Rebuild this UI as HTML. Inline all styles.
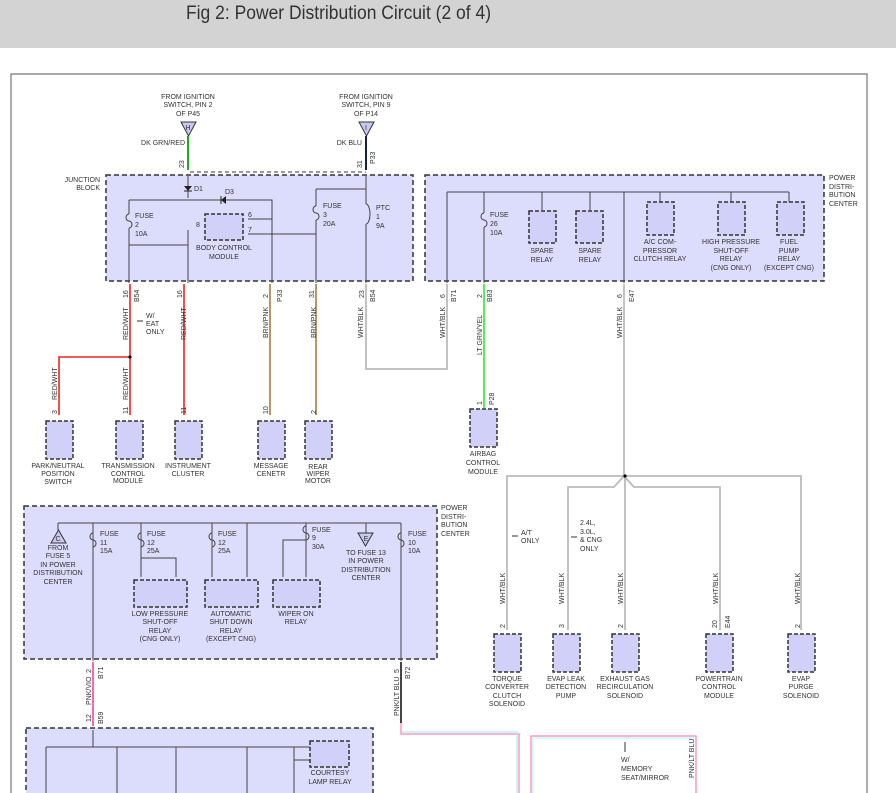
<!DOCTYPE html>
<html><head><meta charset="utf-8"><style>
body{margin:0;width:896px;height:793px;overflow:hidden;background:#fff;font-family:"Liberation Sans",sans-serif}
.hd{position:absolute;left:0;top:0;width:896px;height:48px;background:#d3d3d3}
.hd span{position:absolute;left:186px;top:3px;font-size:19px;color:#333;transform:scaleX(0.92);transform-origin:left}
svg{position:absolute;left:0;top:0}
text{font-family:"Liberation Sans",sans-serif;font-size:7px;fill:#333}
.c{text-anchor:middle}.r{text-anchor:end}
.box{fill:#dcdcfc;stroke:#333;stroke-width:1.5;stroke-dasharray:5 3}
.rel{fill:#d0d0f8;stroke:#333;stroke-width:1.5;stroke-dasharray:4 2}
.w{stroke:#444;stroke-width:1;fill:none}
.fz{fill:#dcdcfc;stroke:#444;stroke-width:1}
</style></head><body>
<div class="hd"><span>Fig 2: Power Distribution Circuit (2 of 4)</span></div>
<svg width="896" height="793" viewBox="0 0 896 793">
<defs><path id="fu" d="M0 -7a3 3.5 0 0 0 0 7a3 3.5 0 0 1 0 7" fill="none" stroke="#444"/></defs>
<path d="M11 793V74H867V793" fill="none" stroke="#777" stroke-width="1.2"/>
<rect class="box" x="106" y="175" width="307" height="106"/>
<rect class="box" x="425" y="175" width="399" height="106"/>
<rect class="box" x="24" y="506" width="413" height="153"/>
<rect class="box" x="26" y="728" width="347" height="80"/>
<text x="100" y="182" class="r">JUNCTION</text><text x="100" y="190" class="r">BLOCK</text>
<text x="829" y="180">POWER</text><text x="829" y="189">DISTRI-</text><text x="829" y="197">BUTION</text><text x="829" y="206">CENTER</text>
<text x="441" y="510">POWER</text><text x="441" y="519">DISTRI-</text><text x="441" y="527">BUTION</text><text x="441" y="536">CENTER</text>
<text class="c" x="188" y="99">FROM IGNITION</text><text class="c" x="188" y="107">SWITCH, PIN 2</text><text class="c" x="188" y="116">OF P45</text>
<text class="c" x="366" y="99">FROM IGNITION</text><text class="c" x="366" y="107">SWITCH, PIN 9</text><text class="c" x="366" y="116">OF P14</text>
<path d="M181 122h15l-7.5 14z" fill="#c8c8f0" stroke="#333"/><text class="c" x="188" y="130">H</text>
<path d="M359 122h15l-7.5 14z" fill="#c8c8f0" stroke="#333"/><text class="c" x="366" y="130">I</text>
<path d="M188 136V170" stroke="#2a2" stroke-width="2"/>
<path d="M366 136V170" stroke="#124" stroke-width="2"/>
<text class="r" x="185" y="145">DK GRN/RED</text><text class="r" x="362" y="145">DK BLU</text>
<text transform="translate(184,168) rotate(-90)">23</text><text transform="translate(362,168) rotate(-90)">31</text>
<text transform="translate(375,164) rotate(-90)">P33</text>
<path d="M190 172h176" stroke="#333" stroke-dasharray="4 3"/>
<g class="w">
<path d="M188 176V198M129 200H272V283M129 200V283M129 245H188V283M188 230V245M248 219H272M248 234H316M316 189V283M316 189H366M366 176V283"/>
</g>
<path d="M184 186h8l-4 5z" fill="#222"/><path d="M184 191h8" stroke="#222"/>
<path d="M226 196v8l-5-4z" fill="#222"/><path d="M221 196v8" stroke="#222"/>
<text x="194" y="191">D1</text><text x="225" y="194">D3</text>
<rect class="rel" x="205" y="214" width="38" height="26"/>
<text x="135" y="218">FUSE</text><text x="135" y="227">2</text><text x="135" y="236">10A</text>
<text x="323" y="208">FUSE</text><text x="323" y="217">3</text><text x="323" y="226">20A</text>
<text x="376" y="210">PTC</text><text x="376" y="219">1</text><text x="376" y="228">9A</text>
<text x="248" y="217">6</text><text x="248" y="232">7</text><text x="196" y="227">8</text>
<text class="c" x="224" y="250">BODY CONTROL</text><text class="c" x="224" y="259">MODULE</text>
<g class="w"><path d="M447 192H789M447 192V283M484 192V283M624 192V283M542 192V210M590 192V210M660 192V202M731 192V202M789 192V202"/></g>
<rect class="rel" x="529" y="211" width="27" height="32"/><rect class="rel" x="576" y="211" width="27" height="32"/>
<rect class="rel" x="647" y="202" width="27" height="33"/><rect class="rel" x="718" y="202" width="27" height="33"/><rect class="rel" x="777" y="202" width="27" height="33"/>
<text x="490" y="217">FUSE</text><text x="490" y="226">26</text><text x="490" y="235">10A</text>
<text class="c" x="542" y="253">SPARE</text><text class="c" x="542" y="262">RELAY</text>
<text class="c" x="590" y="253">SPARE</text><text class="c" x="590" y="262">RELAY</text>
<text class="c" x="660" y="244">A/C COM-</text><text class="c" x="660" y="253">PRESSOR</text><text class="c" x="660" y="261">CLUTCH RELAY</text>
<text class="c" x="731" y="244">HIGH PRESSURE</text><text class="c" x="731" y="253">SHUT-OFF</text><text class="c" x="731" y="261">RELAY</text><text class="c" x="731" y="270">(CNG ONLY)</text>
<text class="c" x="789" y="244">FUEL</text><text class="c" x="789" y="253">PUMP</text><text class="c" x="789" y="261">RELAY</text><text class="c" x="789" y="270">(EXCEPT CNG)</text>
<!-- fuse symbols -->
<g>
<rect x="126" y="214" width="6" height="14" fill="#dcdcfc"/><use href="#fu" x="129" y="221"/>
<rect x="313" y="206" width="6" height="14" fill="#dcdcfc"/><use href="#fu" x="316" y="213"/>
<rect x="363" y="204" width="6" height="20" fill="#dcdcfc"/><path d="M366 204a4 10 0 0 1 0 20" fill="none" stroke="#444"/>
<rect x="481" y="213" width="6" height="14" fill="#dcdcfc"/><use href="#fu" x="484" y="220"/>
<rect x="90" y="533" width="6" height="14" fill="#dcdcfc"/><use href="#fu" x="93" y="540"/>
<rect x="138" y="533" width="6" height="14" fill="#dcdcfc"/><use href="#fu" x="141" y="540"/>
<rect x="209" y="533" width="6" height="14" fill="#dcdcfc"/><use href="#fu" x="212" y="540"/>
<rect x="303" y="527" width="6" height="12" fill="#dcdcfc"/><use href="#fu" x="306" y="533"/>
<rect x="398" y="533" width="6" height="14" fill="#dcdcfc"/><use href="#fu" x="401" y="540"/>
</g>
<path d="M130 284V415M130 357H59V415M184 284V415" stroke="#e22" stroke-width="1.6" fill="none"/>
<path d="M270 284V415M316 284V415" stroke="#b8966a" stroke-width="2" fill="none"/>
<path d="M366 284V369H447V284" stroke="#bbb" stroke-width="1.8" fill="none"/>
<path d="M484 284V408" stroke="#5e5" stroke-width="2"/>
<path d="M624 284V476M507 630V476H624M568 630V487H614L624 476L634 487H720V630M625 476V630M624 476H801V630" stroke="#bbb" stroke-width="1.8" fill="none"/>
<circle cx="130" cy="357" r="1.6" fill="#000"/><circle cx="625" cy="476" r="1.6" fill="#000"/>
<g font-size="6">
<text transform="translate(128,298) rotate(-90)">16</text><text transform="translate(139,302) rotate(-90)">B54</text>
<text transform="translate(182,298) rotate(-90)">16</text>
<text transform="translate(268,298) rotate(-90)">2</text><text transform="translate(282,302) rotate(-90)">P33</text>
<text transform="translate(314,298) rotate(-90)">31</text>
<text transform="translate(364,298) rotate(-90)">23</text><text transform="translate(375,302) rotate(-90)">B54</text>
<text transform="translate(445,298) rotate(-90)">6</text><text transform="translate(456,302) rotate(-90)">B71</text>
<text transform="translate(482,298) rotate(-90)">2</text><text transform="translate(492,302) rotate(-90)">B83</text>
<text transform="translate(622,298) rotate(-90)">6</text><text transform="translate(634,302) rotate(-90)">E47</text>
<text transform="translate(128,340) rotate(-90)">RED/WHT</text><text transform="translate(186,340) rotate(-90)">RED/WHT</text>
<text transform="translate(57,400) rotate(-90)">RED/WHT</text><text transform="translate(128,400) rotate(-90)">RED/WHT</text>
<text transform="translate(268,338) rotate(-90)">BRN/PNK</text><text transform="translate(316,338) rotate(-90)">BRN/PNK</text>
<text transform="translate(363,338) rotate(-90)">WHT/BLK</text><text transform="translate(445,338) rotate(-90)">WHT/BLK</text>
<text transform="translate(482,355) rotate(-90)">LT GRN/YEL</text><text transform="translate(622,338) rotate(-90)">WHT/BLK</text>
<text transform="translate(57,414) rotate(-90)">3</text><text transform="translate(128,414) rotate(-90)">11</text><text transform="translate(186,414) rotate(-90)">11</text>
<text transform="translate(268,414) rotate(-90)">10</text><text transform="translate(316,414) rotate(-90)">2</text>
<text transform="translate(482,405) rotate(-90)">1</text><text transform="translate(494,405) rotate(-90)">P28</text>
<text transform="translate(505,604) rotate(-90)">WHT/BLK</text><text transform="translate(564,604) rotate(-90)">WHT/BLK</text><text transform="translate(623,604) rotate(-90)">WHT/BLK</text><text transform="translate(718,604) rotate(-90)">WHT/BLK</text><text transform="translate(800,604) rotate(-90)">WHT/BLK</text>
<text transform="translate(505,628) rotate(-90)">2</text><text transform="translate(564,628) rotate(-90)">3</text><text transform="translate(623,628) rotate(-90)">2</text><text transform="translate(717,628) rotate(-90)">20</text><text transform="translate(730,628) rotate(-90)">E44</text><text transform="translate(800,628) rotate(-90)">2</text>
</g>
<path d="M143 321h-6" stroke="#333"/><text x="146" y="318">W/</text><text x="146" y="326">EAT</text><text x="146" y="334">ONLY</text>
<path d="M518 536h-6" stroke="#333"/><text x="521" y="535">A/T</text><text x="521" y="543">ONLY</text>
<path d="M577 537h-6" stroke="#333"/><text x="580" y="525">2.4L,</text><text x="580" y="534">3.0L,</text><text x="580" y="542">&amp; CNG</text><text x="580" y="551">ONLY</text>
<rect class="rel" x="46" y="421" width="27" height="38"/><rect class="rel" x="116" y="421" width="27" height="38"/><rect class="rel" x="175" y="421" width="27" height="38"/><rect class="rel" x="258" y="421" width="27" height="38"/><rect class="rel" x="305" y="421" width="27" height="38"/><rect class="rel" x="470" y="409" width="27" height="38"/>
<text class="c" x="58" y="468">PARK/NEUTRAL</text><text class="c" x="58" y="476">POSITION</text><text class="c" x="58" y="484">SWITCH</text>
<text class="c" x="128" y="468">TRANSMISSION</text><text class="c" x="128" y="476">CONTROL</text><text class="c" x="128" y="483">MODULE</text>
<text class="c" x="188" y="468">INSTRUMENT</text><text class="c" x="188" y="476">CLUSTER</text>
<text class="c" x="271" y="468">MESSAGE</text><text class="c" x="271" y="476">CENETR</text>
<text class="c" x="318" y="469">REAR</text><text class="c" x="318" y="476">WIPER</text><text class="c" x="318" y="483">MOTOR</text>
<text class="c" x="483" y="456">AIRBAG</text><text class="c" x="483" y="465">CONTROL</text><text class="c" x="483" y="474">MODULE</text>
<rect class="rel" x="494" y="634" width="27" height="38"/><rect class="rel" x="553" y="634" width="27" height="38"/><rect class="rel" x="612" y="634" width="27" height="38"/><rect class="rel" x="706" y="634" width="27" height="38"/><rect class="rel" x="788" y="634" width="27" height="38"/>
<text class="c" x="507" y="681">TORQUE</text><text class="c" x="507" y="689">CONVERTER</text><text class="c" x="507" y="698">CLUTCH</text><text class="c" x="507" y="706">SOLENOID</text>
<text class="c" x="566" y="681">EVAP LEAK</text><text class="c" x="566" y="689">DETECTION</text><text class="c" x="566" y="698">PUMP</text>
<text class="c" x="625" y="681">EXHAUST GAS</text><text class="c" x="625" y="689">RECIRCULATION</text><text class="c" x="625" y="698">SOLENOID</text>
<text class="c" x="719" y="681">POWERTRAIN</text><text class="c" x="719" y="689">CONTROL</text><text class="c" x="719" y="698">MODULE</text>
<text class="c" x="801" y="681">EVAP</text><text class="c" x="801" y="689">PURGE</text><text class="c" x="801" y="698">SOLENOID</text>
<g class="w"><path d="M58 523H401M93 523V661M141 523V577M141 558H176V577M212 523V577M247 523V577M306 523V540M306 540H283V577M306 540V577M401 523V661M366 523V533M58 523V530"/></g>
<path d="M51 543h15l-7.5-13z" fill="#c8c8f0" stroke="#333"/><text class="c" x="58" y="541">C</text>
<path d="M358 533h15l-7.5 13z" fill="#c8c8f0" stroke="#333"/><text class="c" x="366" y="541">E</text>
<rect class="rel" x="134" y="580" width="53" height="27"/><rect class="rel" x="205" y="580" width="53" height="27"/><rect class="rel" x="273" y="580" width="47" height="27"/>
<text class="c" x="58" y="550">FROM</text><text class="c" x="58" y="558">FUSE 5</text><text class="c" x="58" y="567">IN POWER</text><text class="c" x="58" y="575">DISTRIBUTION</text><text class="c" x="58" y="584">CENTER</text>
<text class="c" x="366" y="555">TO FUSE 13</text><text class="c" x="366" y="563">IN POWER</text><text class="c" x="366" y="572">DISTRIBUTION</text><text class="c" x="366" y="580">CENTER</text>
<text x="100" y="536">FUSE</text><text x="100" y="545">11</text><text x="100" y="553">15A</text>
<text x="147" y="536">FUSE</text><text x="147" y="545">12</text><text x="147" y="553">25A</text>
<text x="218" y="536">FUSE</text><text x="218" y="545">12</text><text x="218" y="553">25A</text>
<text x="312" y="532">FUSE</text><text x="312" y="540">9</text><text x="312" y="549">30A</text>
<text x="408" y="536">FUSE</text><text x="408" y="545">10</text><text x="408" y="553">10A</text>
<text class="c" x="160" y="616">LOW PRESSURE</text><text class="c" x="160" y="624">SHUT-OFF</text><text class="c" x="160" y="633">RELAY</text><text class="c" x="160" y="641">(CNG ONLY)</text>
<text class="c" x="231" y="616">AUTOMATIC</text><text class="c" x="231" y="624">SHUT DOWN</text><text class="c" x="231" y="633">RELAY</text><text class="c" x="231" y="641">(EXCEPT CNG)</text>
<text class="c" x="296" y="616">WIPER ON</text><text class="c" x="296" y="624">RELAY</text>
<path d="M93 662V726" stroke="#f6a" stroke-width="2"/>
<path d="M401 662V723" stroke="#444" stroke-width="2"/>
<path d="M401 723V734H519V793" stroke="#f8a" stroke-width="1.3" fill="none"/>
<path d="M402 732H517V793" stroke="#aef" stroke-width="1.3" fill="none"/>
<path d="M531 793V736H696V793" stroke="#f8a" stroke-width="1.3" fill="none"/>
<path d="M533 793V738H694" stroke="#aef" stroke-width="1" fill="none"/>
<g font-size="6">
<text transform="translate(91,673) rotate(-90)">2</text><text transform="translate(103,679) rotate(-90)">B71</text>
<text transform="translate(91,705) rotate(-90)">PNK/VIO</text>
<text transform="translate(91,722) rotate(-90)">12</text><text transform="translate(103,724) rotate(-90)">B59</text>
<text transform="translate(399,673) rotate(-90)">5</text><text transform="translate(410,679) rotate(-90)">B72</text>
<text transform="translate(399,716) rotate(-90)">PNK/LT BLU</text>
<text transform="translate(694,778) rotate(-90)">PNK/LT BLU</text>
</g>
<path d="M625 742v10" stroke="#333"/><text x="621" y="762">W/</text><text x="621" y="771">MEMORY</text><text x="621" y="780">SEAT/MIRROR</text>
<g class="w"><path d="M93 730V747M46 747H301M46 747V793M117 747V793M176 747V793M247 747V793M294 747V793M294 747H310M294 760H310"/></g>
<rect class="rel" x="310" y="741" width="39" height="26"/>
<text class="c" x="330" y="775">COURTESY</text><text class="c" x="330" y="784">LAMP RELAY</text>
</svg>
</body></html>
